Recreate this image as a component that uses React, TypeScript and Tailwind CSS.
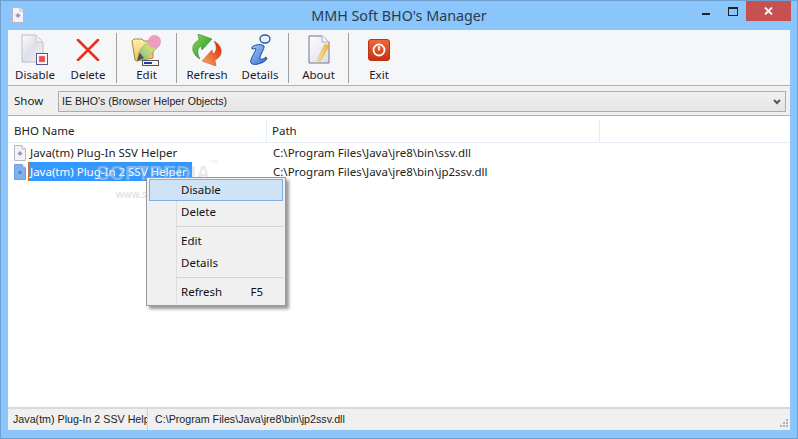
import type { ReactNode } from "react";

const uiFont = "font-['Noto_Sans','Open_Sans',sans-serif]";

function FileIcon({ selected }: { selected?: boolean }) {
  return (
    <svg width="12" height="16" viewBox="0 0 12 16" className="shrink-0">
      <path
        d="M.5.5H8L11.5 4V15.5H.5Z"
        fill={selected ? "#7db0ec" : "#f4f2f8"}
        stroke={selected ? "#6aa0e0" : "#b9b6c6"}
      />
      <path d="M8 .5V4H11.5" fill={selected ? "#c5dcf6" : "#fff"} stroke={selected ? "#6aa0e0" : "#b9b6c6"} />
      <path
        d="M6 5.500L9 8.500L6 11.500L3 8.500Z"
        fill={selected ? "#4f86d4" : "#9a94c0"}
        stroke={selected ? "#a8ccf4" : "#fff"}
        strokeWidth=".8"
      />
    </svg>
  );
}

function DisableIcon() {
  return (
    <svg width="28" height="32" viewBox="0 0 28 32">
      <defs>
        <linearGradient id="pg" x1="0" y1="0" x2="1" y2="1">
          <stop offset="0" stopColor="#fbfbfd" />
          <stop offset=".5" stopColor="#dfdfe8" />
          <stop offset="1" stopColor="#f5f5f8" />
        </linearGradient>
      </defs>
      <path d="M1 1H15L22 8V28H1Z" fill="url(#pg)" stroke="#bdbdca" />
      <path d="M15 1V8H22Z" fill="#f4f4f8" stroke="#c8c8d4" />
      <rect x="15.500" y="19.500" width="11" height="11" fill="#fff" stroke="#55558a" />
      <rect x="18" y="22" width="6" height="6" fill="#ee4b4b" stroke="#f59a9a" strokeWidth=".5" />
    </svg>
  );
}

function DeleteIcon() {
  return (
    <svg width="24" height="22" viewBox="0 0 24 22">
      <path d="M2 1L22 21M22 1L2 21" stroke="#e8321c" strokeWidth="2.600" strokeLinecap="round" />
    </svg>
  );
}

function EditIcon() {
  return (
    <svg width="31" height="32" viewBox="0 0 31 32">
      <defs>
        <linearGradient id="fold" x1="0" y1="0" x2="0" y2="1">
          <stop offset="0" stopColor="#fdf0b0" />
          <stop offset="1" stopColor="#e6c260" />
        </linearGradient>
        <linearGradient id="pen" x1="0" y1="1" x2="1" y2="0">
          <stop offset="0" stopColor="#5fb8a8" />
          <stop offset=".5" stopColor="#c8dc70" />
          <stop offset="1" stopColor="#f0b080" />
        </linearGradient>
      </defs>
      <path d="M1 7L3 5H11L13 7H22V24L6 27L4 26Z" fill="url(#fold)" stroke="#a88a3c" />
      <path d="M6 27L9 16L21 3L29 11L17 23Z" fill="url(#pen)" stroke="#a89878" strokeWidth=".6" />
      <circle cx="23.500" cy="7.500" r="6.500" fill="#ec9cc0" />
      <path d="M6 27L8.500 18.500L13 24Z" fill="#54564a" />
      <rect x="11.500" y="26.500" width="16" height="5" fill="#f4f4f4" stroke="#555" />
      <rect x="13" y="28" width="8" height="2" fill="#1a3ab0" />
    </svg>
  );
}

function RefreshIcon() {
  return (
    <svg width="30" height="32" viewBox="0 0 30 32">
      <defs>
        <linearGradient id="gr" x1="0" y1="0" x2="1" y2="1">
          <stop offset="0" stopColor="#8ede4e" />
          <stop offset="1" stopColor="#138a2a" />
        </linearGradient>
        <linearGradient id="rd" x1="1" y1="0" x2="0" y2="1">
          <stop offset="0" stopColor="#d8200c" />
          <stop offset="1" stopColor="#fbb060" />
        </linearGradient>
      </defs>
      <path d="M8 25C-1 20-2 10 7 6L6 0L20 5L10 16L9 12C5 14 5 20 8 25Z" fill="url(#gr)" stroke="#2a7a2a" strokeWidth=".5" />
      <path d="M22 7C31 12 32 22 23 26L24 32L10 27L20 16L21 20C25 18 25 12 22 7Z" fill="url(#rd)" stroke="#c04a20" strokeWidth=".5" />
    </svg>
  );
}

function DetailsIcon() {
  return (
    <svg width="26" height="32" viewBox="0 0 26 32">
      <defs>
        <linearGradient id="bl" x1="0" y1="0" x2="1" y2="1">
          <stop offset="0" stopColor="#a8d0f8" />
          <stop offset="1" stopColor="#2a68c8" />
        </linearGradient>
      </defs>
      <ellipse cx="18" cy="5" rx="5" ry="4" fill="#e8f2fc" stroke="#2a5aa8" strokeWidth="1.400" />
      <path
        d="M5 13C9 10 15 10 17 12C18 14 12 23 13 25C15 26 18 24 19 23L20 25C16 30 6 32 4 29C2 26 9 17 9 15C8 14 6 15 5 15Z"
        fill="url(#bl)"
        stroke="#1f4f9e"
      />
    </svg>
  );
}

function AboutIcon() {
  return (
    <svg width="22" height="30" viewBox="0 0 22 30">
      <defs>
        <linearGradient id="pa" x1="0" y1="0" x2="1" y2="1">
          <stop offset="0" stopColor="#fdfdfe" />
          <stop offset="1" stopColor="#dcdce6" />
        </linearGradient>
        <linearGradient id="py" x1="0" y1="0" x2="1" y2="0">
          <stop offset="0" stopColor="#fbe68a" />
          <stop offset="1" stopColor="#eeb22c" />
        </linearGradient>
      </defs>
      <path d="M1 1H14L21 7V28H1Z" fill="url(#pa)" stroke="#77778c" />
      <path d="M14 1V7H21" fill="#f6f6f8" stroke="#b0b0bc" />
      <path d="M10 24L17 9L21 11L13 25L10 26Z" fill="url(#py)" stroke="#d8a438" strokeWidth=".5" />
    </svg>
  );
}

function ExitIcon() {
  return (
    <svg width="22" height="22" viewBox="0 0 22 22">
      <defs>
        <linearGradient id="ex" x1="0" y1="0" x2="0" y2="1">
          <stop offset="0" stopColor="#ee6a3e" />
          <stop offset="1" stopColor="#c5300f" />
        </linearGradient>
      </defs>
      <rect x=".5" y=".5" width="21" height="21" rx="2.500" fill="url(#ex)" stroke="#b9331a" />
      <circle cx="11" cy="11" r="5.500" fill="none" stroke="#fff" strokeWidth="1.800" />
      <path d="M11 6.500V11.500" stroke="#ee6a3e" strokeWidth="3.500" />
      <path d="M11 7V11.500" stroke="#fff" strokeWidth="1.600" />
    </svg>
  );
}

function ToolButton({ label, icon, width }: { label: string; icon: ReactNode; width: string }) {
  return (
    <div className={`flex flex-col items-center pt-[2px] ${width}`}>
      <div className="flex h-[35px] items-center justify-center">{icon}</div>
      <span className="text-[11.500px] leading-[16px] text-[#1a1a2e]">{label}</span>
    </div>
  );
}

function ToolSep() {
  return <div className="mt-[3px] h-[50px] w-px bg-[#a0a0a0]" />;
}

function MenuItem({ label, hint, active }: { label: string; hint?: string; active?: boolean }) {
  return (
    <div
      className={`flex h-[22px] items-center pr-[20px] text-[11.500px] text-[#111] ${
        active ? "border border-[#7fb0e4] bg-[#cfe3f6] pl-[31px]" : "pl-[32px]"
      }`}
    >
      <span className="flex-1">{label}</span>
      {hint && <span>{hint}</span>}
    </div>
  );
}

function MenuSep() {
  return <div className="my-[3px] ml-[28px] h-px bg-[#d4d4d4]" />;
}

export default function App() {
  return (
    <div className={`flex h-[439px] w-[798px] flex-col overflow-hidden border border-[#6f9fcf] bg-[#8ac6fb] ${uiFont}`}>
      {/* title bar */}
      <div className="relative flex h-[29px] shrink-0 items-center justify-center">
        <div className="absolute left-[11px] top-[6px]">
          <FileIcon />
        </div>
        <span className="text-[14.300px] text-[#2a3a4a]">MMH Soft BHO's Manager</span>
        <div className="absolute right-[6px] top-0 flex h-[20px] items-start">
          <div className="mr-[18px] mt-[12px] h-[2px] w-[8px] bg-[#222]" />
          <div className="mr-[8px] mt-[6px] h-[9px] w-[10px] border border-t-2 border-[#222]" />
          <div className="flex h-[20px] w-[45px] items-center justify-center bg-[#c75050]">
            <svg width="9" height="8" viewBox="0 0 9 8">
              <path d="M1 .5L8 7.500M8 .5L1 7.500" stroke="#fff" strokeWidth="1.800" />
            </svg>
          </div>
        </div>
      </div>

      {/* client area */}
      <div className="mx-[7px] flex h-[400px] flex-col bg-white">
        <div className="flex h-[56px] shrink-0 items-start border-b border-[#b0b0b0] bg-[#f5f6f8]">
          <ToolButton label="Disable" icon={<DisableIcon />} width="w-[54px]" />
          <ToolButton label="Delete" icon={<DeleteIcon />} width="w-[54px] pr-[2px]" />
          <ToolSep />
          <ToolButton label="Edit" icon={<EditIcon />} width="w-[59px]" />
          <ToolSep />
          <ToolButton label="Refresh" icon={<RefreshIcon />} width="w-[60px]" />
          <ToolButton label="Details" icon={<DetailsIcon />} width="w-[51px] pr-[5px]" />
          <ToolSep />
          <ToolButton label="About" icon={<AboutIcon />} width="w-[59px]" />
          <ToolSep />
          <ToolButton label="Exit" icon={<ExitIcon />} width="w-[60px]" />
        </div>

        <div className="flex h-[30px] shrink-0 items-center border-b border-[#b0b0b0] bg-[#f0f0f0] pl-[6px] pr-[4px] pt-[2px]">
          <span className="-mt-[2px] w-[44px] text-[11.500px] text-[#222]">Show</span>
          <div className="flex h-[21px] flex-1 items-center justify-between border border-[#acacac] bg-gradient-to-b from-[#f0f0f0] to-[#e5e5e5] pl-[3px] pr-[4px]">
            <span className="font-['Liberation_Sans',sans-serif] text-[10.600px] text-[#222]">
              IE BHO's (Browser Helper Objects)
            </span>
            <svg width="8" height="6" viewBox="0 0 8 6">
              <path d="M1 1L4 4L7 1" fill="none" stroke="#555" strokeWidth="2" />
            </svg>
          </div>
        </div>

        {/* list */}
        <div className="relative flex-1 bg-white">
          <div className="flex h-[27px] items-center border-b border-t-4 border-b-[#e5eef6] border-t-white text-[11.500px] text-[#222]">
            <div className="flex h-full w-[259px] items-center border-r border-[#e5eef6] pl-[6px]">BHO Name</div>
            <div className="flex h-full w-[333px] items-center border-r border-[#e5eef6] pl-[5px]">Path</div>
          </div>
          <div className="text-[11.500px] text-[#222]">
            <div className="flex h-[19px] items-center">
              <div className="flex w-[259px] items-center pl-[6px]">
                <FileIcon />
                <span className="ml-[2px] whitespace-nowrap px-[2px]">Java(tm) Plug-In SSV Helper</span>
              </div>
              <span className="whitespace-nowrap pl-[6px]">C:\Program Files\Java\jre8\bin\ssv.dll</span>
            </div>
            <div className="flex h-[19px] items-center">
              <div className="flex w-[259px] items-center pl-[6px]">
                <FileIcon selected />
                <span className="ml-[2px] flex h-[19px] w-[164px] items-center whitespace-nowrap border border-dotted border-[#d86a20] bg-[#3399ff] px-[1px] text-white">
                  Java(tm) Plug-In 2 SSV Helper
                </span>
              </div>
              <span className="whitespace-nowrap pl-[6px]">C:\Program Files\Java\jre8\bin\jp2ssv.dll</span>
            </div>
          </div>

          {/* watermark */}
          <div className="absolute left-[88px] top-[42px] font-['Liberation_Sans',sans-serif] text-[20px] font-bold text-[#cfd6dc]/50">
            SOFTPEDIA<span className="align-top text-[8px]">™</span>
          </div>
          <div className="absolute left-[108px] top-[71px] text-[10px] text-[#dcdcdc]">www.softpedia.com</div>

          {/* context menu */}
          <div className="absolute left-[138px] top-[61px] h-[129px] w-[140px] border border-[#9a9a9a] bg-[#f0f0f0] px-[2px] py-[1px] shadow-[3px_3px_3px_rgba(0,0,0,0.4)]">
            <div className="absolute bottom-[2px] left-[29px] top-[2px] w-px bg-[#dcdcdc]" />
            <div className="relative">
              <MenuItem label="Disable" active />
              <MenuItem label="Delete" />
              <MenuSep />
              <MenuItem label="Edit" />
              <MenuItem label="Details" />
              <MenuSep />
              <MenuItem label="Refresh" hint="F5" />
            </div>
          </div>
        </div>

        {/* status bar */}
        <div className="relative flex h-[23px] shrink-0 items-center border-t-2 border-[#d9d9d9] bg-[#f0f0f0] font-['Liberation_Sans',sans-serif] text-[10.700px] text-[#222]">
          <div className="flex h-full w-[140px] items-center overflow-hidden whitespace-nowrap border-r border-[#d0d0d0] pl-[5px]">
            Java(tm) Plug-In 2 SSV Help
          </div>
          <span className="pl-[7px]">C:\Program Files\Java\jre8\bin\jp2ssv.dll</span>
          <svg width="10" height="10" viewBox="0 0 10 10" className="absolute bottom-[1px] right-[1px]" fill="#b0b0b0">
            <rect x="7" y="0" width="2" height="2" />
            <rect x="4" y="3" width="2" height="2" />
            <rect x="7" y="3" width="2" height="2" />
            <rect x="1" y="6" width="2" height="2" />
            <rect x="4" y="6" width="2" height="2" />
            <rect x="7" y="6" width="2" height="2" />
          </svg>
        </div>
      </div>
    </div>
  );
}
